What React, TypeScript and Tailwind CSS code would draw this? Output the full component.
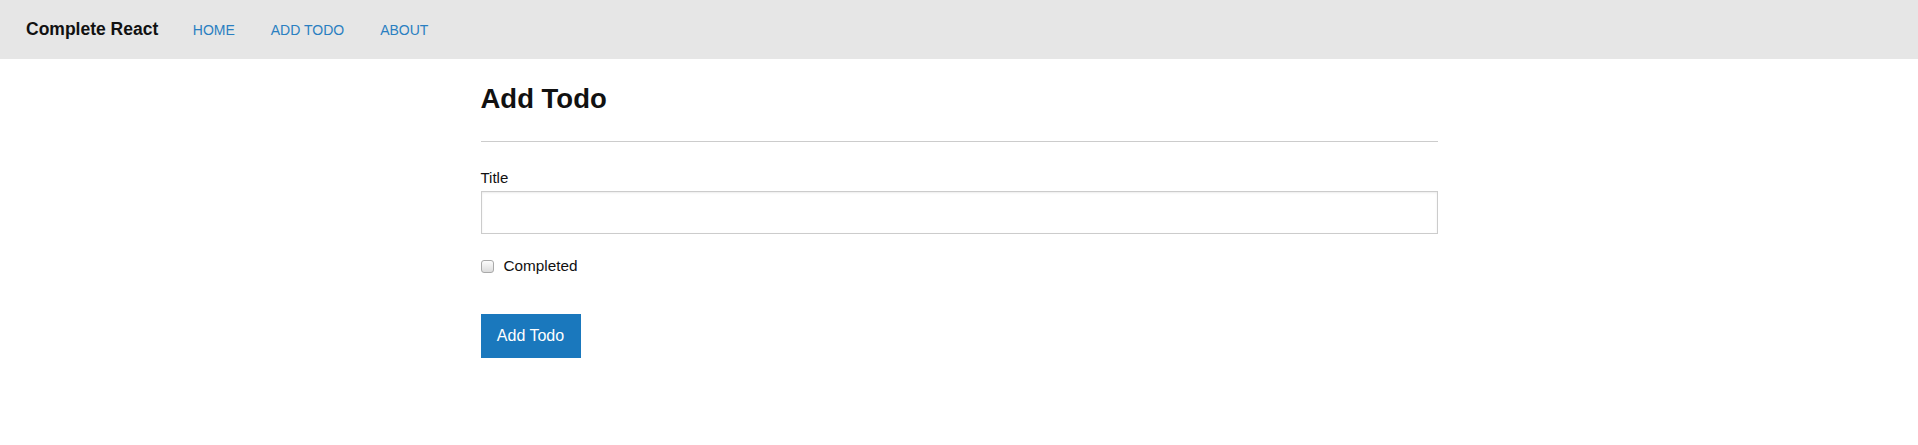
import { useState } from "react"

export default function App() {
  const [title, setTitle] = useState("")
  const [completed, setCompleted] = useState(false)

  return (
    <div className="min-h-screen bg-white font-['Liberation_Sans',Arial,sans-serif] text-[#111]">
      <nav className="h-[59px] bg-[#e6e6e6] flex items-center pl-[26px]">
        <div className="flex items-baseline">
          <span className="text-[17.5px] font-bold text-[#111] mr-[16.5px]">Complete React</span>
          <a href="#" className="px-[18px] text-[14px] text-[#2a7fc1]">HOME</a>
          <a href="#" className="px-[18px] text-[14px] text-[#2a7fc1]">ADD TODO</a>
          <a href="#" className="px-[18px] text-[14px] text-[#2a7fc1]">ABOUT</a>
        </div>
      </nav>

      <main className="w-[957px] mx-auto">
        <h1 className="mt-[24px] text-[27.5px] leading-[31px] font-bold text-[#111]">Add Todo</h1>
        <hr className="mt-[27px] border-0 border-t border-[#cccccc]" />

        <form onSubmit={(e) => e.preventDefault()}>
          <label className="block mt-[27px] mb-[4px] text-[15px] leading-[18px]">Title</label>
          <input
            type="text"
            value={title}
            onChange={(e) => setTitle(e.target.value)}
            className="block w-full h-[43px] border border-[#cccccc] shadow-[inset_0_1px_2px_rgba(0,0,0,0.08)] px-2 text-[15px] outline-none"
          />

          <label className="mt-[23px] flex items-center h-[18px] text-[15.3px] leading-[18px]">
            <input
              type="checkbox"
              checked={completed}
              onChange={(e) => setCompleted(e.target.checked)}
              className="appearance-none w-[13px] h-[13px] rounded-[3px] border border-[#a9a9a9] bg-gradient-to-b from-[#fcfcfc] to-[#dcdcdc] mr-[10px] shrink-0"
            />
            Completed
          </label>

          <button
            type="submit"
            className="mt-[39px] w-[100px] h-[44px] bg-[#1a78bd] text-white text-[16px]"
          >
            Add Todo
          </button>
        </form>
      </main>
    </div>
  )
}
